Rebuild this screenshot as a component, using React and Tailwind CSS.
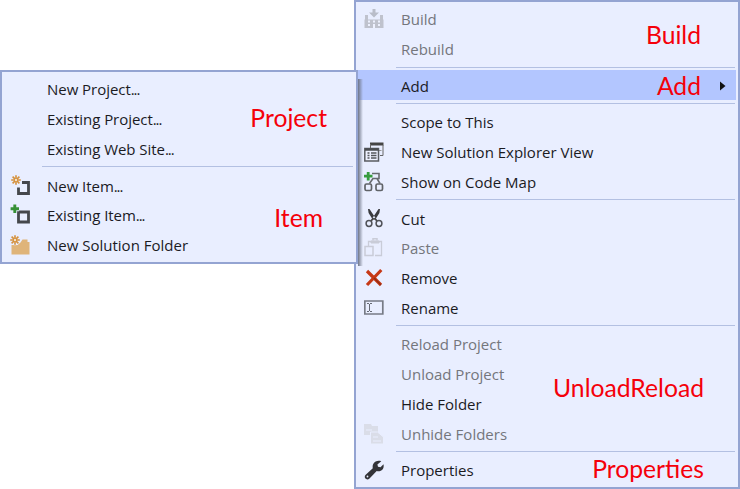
import React from "react";

const svg = { width: 20, height: 20, viewBox: "0 0 20 20", fill: "none", className: "block" };

const BuildIcon = () => (
  <svg {...svg}>
    <path d="M8.500 0h3v3.500H15L10 8.500 5 3.500h3.500z" fill="#b9bdc9" />
    <path d="M0.500 10.500h19v8.500h-19zM1 6h3v5H1zM16 6h3v5h-3z" fill="#bfc2cd" />
    <path d="M4 11.500h2v2H4zM9 11.500h2v2H9zM14 11.500h2v2h-2zM4 15h2v2H4zM14 15h2v2h-2zM9 15h2v4H9z" fill="#eef1ff" />
  </svg>
);
const ViewIcon = () => (
  <svg {...svg}>
    <path d="M6 0.500h13.500v3H6z" fill="#444" />
    <path d="M6.500 2v4M19 3v10.500h-3" stroke="#666" />
    <path d="M15 8.500h2.500" stroke="#999" />
    <path d="M.8 6.500h13.700V19H.8z" fill="#eef1ff" stroke="#5a5c62" strokeWidth="1.500" />
    <path d="M1 7.500h13.500" stroke="#4a4c50" strokeWidth="2.500" />
    <path d="M3.500 11h2M3.500 13.500h2M3.500 16h2M7 11h5.500M7 13.500h5.500M7 16h5.500" stroke="#55575c" strokeWidth="1.300" />
  </svg>
);
const MapIcon = () => (
  <svg {...svg}>
    <path d="M8 1.500h7v5H8.500M9 6.500 5.500 11.500M13 6.500l3 5" stroke="#686b70" strokeWidth="1.600" />
    <rect x="1" y="12" width="6.500" height="6.500" rx="1.500" stroke="#606368" strokeWidth="1.700" />
    <rect x="12" y="12" width="6.500" height="6.500" rx="1.500" stroke="#606368" strokeWidth="1.700" />
    <path d="M4.200 0v8.500M0 4.200h8.500" stroke="#379c3e" strokeWidth="2.800" />
  </svg>
);
const CutIcon = () => (
  <svg {...svg}>
    <path d="M4 0l.6 4L9 11l2.500-2L5.500 0zM16 0l-.6 4L11 11 8.500 9l6-9z" fill="#3a3b3f" />
    <path d="M9.500 9 7 12M10.500 9 13 12" stroke="#444" strokeWidth="1.800" />
    <circle cx="5" cy="14.500" r="2.900" stroke="#505258" strokeWidth="1.500" />
    <circle cx="15" cy="14.500" r="2.900" stroke="#505258" strokeWidth="1.500" />
  </svg>
);
const PasteIcon = () => (
  <svg {...svg} stroke="#c9ccd8">
    <path d="M4.500 8V3.500h13V17.500H11" strokeWidth="1.300" />
    <path d="M7 3h8v2H7z" fill="#c9ccd8" />
    <path d="M9 2.500V.8h4v1.700" strokeWidth="1.500" />
    <path d="M1 8.500h8V17.500H1z" strokeWidth="1.500" />
  </svg>
);
const RemoveIcon = () => (
  <svg {...svg}>
    <path d="M3 3 17 17M17.300 2 3 17" stroke="#c63816" strokeWidth="3.200" />
    <path d="M10 10 17 17" stroke="#922b12" strokeWidth="1.200" />
  </svg>
);
const RenameIcon = () => (
  <svg {...svg}>
    <path d="M.8 3h18v13H.8z" stroke="#777b86" strokeWidth="1.700" />
    <path d="M3 5.500h2M6 5.500h2M3 13.500h2M6 13.500h2M5.500 6v7" stroke="#666a74" />
  </svg>
);
const UnhideIcon = () => (
  <svg {...svg} fill="#dadde8">
    <path d="M0 0h7l1 2h6v9H0z" />
    <path d="M6.500 8h7l6 5v7h-13z" stroke="#e9eeff" />
    <path d="M2 6h6M9 13h5M9 17h8" stroke="#e9eeff" />
  </svg>
);
const WrenchIcon = () => (
  <svg {...svg}>
    <path d="M17.300 1.200 13.400 4.600l.6 2.200 2.500.4 3-2.900c.7 3.400-.6 6-3.300 6.800-1.300.4-2.600.2-3.500-.2L5.500 18.400c-1.200 1.300-3.100 1.300-4.100.2-1-1.100-.8-2.900.3-3.900L8.800 8.200C8.200 5.600 9.200 2.900 11.600 1.600c1.700-1 3.900-1 5.700-.4z" fill="#333338" />
    <circle cx="3.500" cy="16.500" r=".9" fill="#e9eeff" />
  </svg>
);
const Spark = () => (
  <path d="M5 .2v9.600M.2 5h9.600M1.600 1.600l6.800 6.800M8.400 1.600 1.600 8.400" stroke="#d4903c" strokeWidth="1.600" />
);
const NewItemIcon = () => (
  <svg {...svg} className="block overflow-visible">
    <path d="M12 6.500h6.500v11h-10V11.500" stroke="#45474c" strokeWidth="2.800" />
    <g transform="translate(1 -1)">
      <Spark />
      <circle cx="5" cy="5" r="1.200" fill="#f4e3cd" />
    </g>
  </svg>
);
const ExistingItemIcon = () => (
  <svg {...svg} className="block overflow-visible">
    <path d="M8.500 7h10v10h-10z" stroke="#45474c" strokeWidth="2.800" />
    <path d="M4.800-.5v9M.6 4h8.500" stroke="#e9eeff" strokeWidth="4.500" />
    <path d="M4.800-.5v8.500M.6 3.800h8.400" stroke="#369036" strokeWidth="2.900" />
  </svg>
);
const FolderIcon = () => (
  <svg {...svg}>
    <path d="M1.500 10h6l3-2.500 2-3h5V7h2v12.500h-18z" fill="#dfb47a" />
    <circle cx="5" cy="5" r="5.300" fill="#e9eeff" />
    <Spark />
    <circle cx="5" cy="5" r="1.200" fill="#f4e3cd" />
  </svg>
);

const buildGroup = [
  { label: "Build", icon: BuildIcon, off: true },
  { label: "Rebuild", off: true },
];

const mainMenu = [
  { sep: "h-1.5 pt-[3px]" },
  { label: "Add", active: true },
  { sep: "h-[7px] pt-[3px]" },
  { label: "Scope to This" },
  { label: "New Solution Explorer View", icon: ViewIcon },
  { label: "Show on Code Map", icon: MapIcon },
  { sep: "h-[7px] pt-[2px]" },
  { label: "Cut", icon: CutIcon, short: true },
  { label: "Paste", icon: PasteIcon, off: true },
  { label: "Remove", icon: RemoveIcon },
  { label: "Rename", icon: RenameIcon },
  { sep: "h-1.5 pt-[2px]" },
  { label: "Reload Project", off: true },
  { label: "Unload Project", off: true },
  { label: "Hide Folder" },
  { label: "Unhide Folders", icon: UnhideIcon, off: true },
  { sep: "h-1.5 pt-[2px]" },
  { label: "Properties", icon: WrenchIcon },
];

const subMenu = [
  { label: "New Project", more: true },
  { label: "Existing Project", more: true },
  { label: "Existing Web Site", more: true },
  { sep: "h-[7px] pt-[2px]" },
  { label: "New Item", more: true, icon: NewItemIcon, short: true },
  { label: "Existing Item", more: true, icon: ExistingItemIcon },
  { label: "New Solution Folder", icon: FolderIcon },
];

function Row({ item }) {
  if (item.sep) {
    return (
      <div className={`${item.sep} ml-10 mr-[3px]`}>
        <div className="h-px bg-[#b3c0e2]" />
      </div>
    );
  }
  const Icon = item.icon;
  return (
    <div
      className={`flex items-center ${item.short ? "h-[29px] pt-px" : "h-[30px]"} ${
        item.active ? "mr-0.5 bg-[#b3c6ff] pt-px" : ""
      } ${item.off ? "text-[#74767c]" : "text-[#1b1b1f]"}`}
    >
      <div className="w-[45px] pl-2">{Icon && <Icon />}</div>
      <span className="whitespace-nowrap text-[15px] leading-5">
        {item.more ? <span className="-tracking-[0.04px]">{item.label}</span> : item.label}
        {item.more && <span className="-tracking-[1.1px]">...</span>}
      </span>
      {item.active && (
        <svg width="6" height="10" viewBox="0 0 6 10" className="mr-[10px] ml-auto">
          <path d="M0 0.500 5.500 5 0 9.500z" fill="#111" />
        </svg>
      )}
    </div>
  );
}

const notes = [
  { text: "Build", pos: "right-[39px] top-[19px]" },
  { text: "Add", pos: "right-[39px] top-[70px]" },
  { text: "Project", pos: "right-[413px] top-[102px]" },
  { text: "Item", pos: "right-[417px] top-[202px]" },
  { text: "UnloadReload", pos: "right-[36px] top-[372px]" },
  { text: "Properties", pos: "right-[36px] top-[453px]" },
];

export default function App() {
  return (
    <div className="relative flex h-[489px] w-[740px] overflow-hidden bg-white font-['Open_Sans','Noto_Sans',sans-serif]">
      <div className="ml-[354px] h-[489px] w-[386px] border-2 border-[#94a4d2] bg-[#e9eeff] pt-[2px]">
        {[...buildGroup, ...mainMenu].map((item, i) => (
          <Row key={i} item={item} />
        ))}
      </div>
      <div className="absolute left-[358px] top-[79px] h-[187px] w-[5px] bg-gradient-to-r from-[#6f7688] to-[#8e98b800]" />
      <div className="absolute left-0 top-[70px] h-[194px] w-[358px] border-2 border-[#94a4d2] bg-[#e9eeff] pt-[2px]">
        {subMenu.map((item, i) => (
          <Row key={i} item={item} />
        ))}
      </div>
      {notes.map((n) => (
        <span
          key={n.text}
          className={`absolute ${n.pos} whitespace-nowrap font-['Lato',sans-serif] text-[24.7px] leading-8 text-[#f5000a]`}
        >
          {n.text}
        </span>
      ))}
    </div>
  );
}
